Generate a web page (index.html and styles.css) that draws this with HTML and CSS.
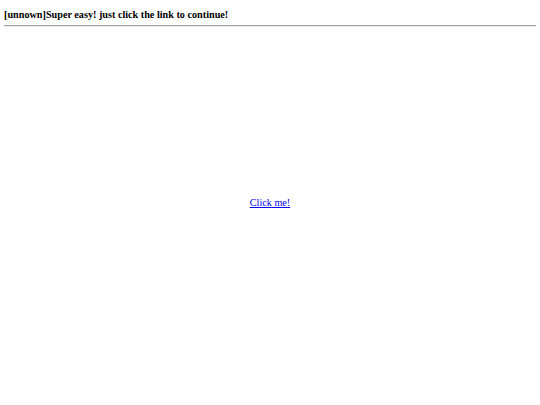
FILE: index.html
```html
<!DOCTYPE html>
<html>
<head>
<meta charset="utf-8">
<link rel="stylesheet" href="styles.css">
</head>
<body class="page">
<h3 class="title">[unnown]Super easy! just click the link to continue!</h3>
<hr class="rule">
<div class="center">
<a class="link" href="#">Click me!</a>
</div>
</body>
</html>
```
FILE: styles.css
```css
html, body { margin: 0; padding: 0; }
.page {
  margin: 0 4px;
  font-family: "Liberation Serif", "Times New Roman", serif;
  background: #fff;
  color: #000;
  height: 405px;
  display: flex;
  flex-direction: column;
}
.title {
  font-size: 10.2px;
  font-weight: bold;
  margin: 9px 0 0 0;
  line-height: 12px;
}
.rule {
  margin: 4px 0 0 0;
  border: none;
  border-top: 1px solid #a0a0a0;
  border-bottom: 1px solid #eee;
  height: 0;
}
.center {
  display: flex;
  justify-content: center;
  padding-top: 170px;
}
.link {
  font-size: 10.2px;
  line-height: 12px;
  color: #0000ee;
  text-decoration: underline;
}
```
